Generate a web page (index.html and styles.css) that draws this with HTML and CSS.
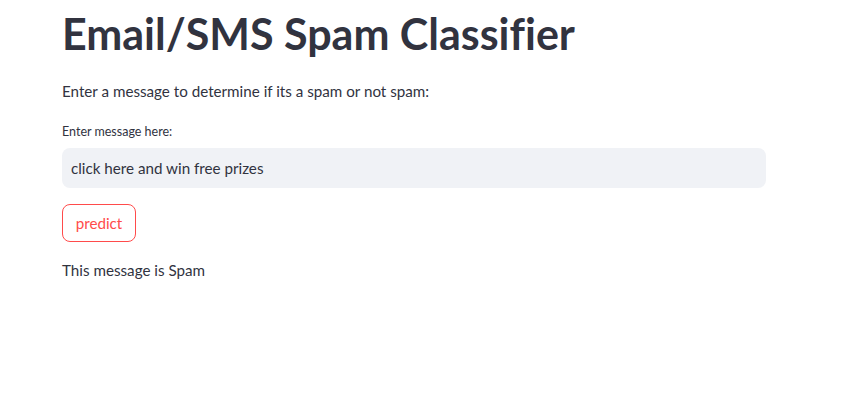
FILE: index.html
```html
<!DOCTYPE html>
<html>
<head>
<meta charset="utf-8">
<link rel="stylesheet" href="styles.css">
</head>
<body>
<main class="container">
  <h1 class="title">Email/SMS Spam Classifier</h1>
  <p class="intro">Enter a message to determine if its a spam or not spam:</p>
  <label class="label">Enter message here:</label>
  <div class="input">click here and win free prizes</div>
  <button class="btn">predict</button>
  <p class="result">This message is Spam</p>
</main>
</body>
</html>
```

FILE: styles.css
```css
html, body {
  margin: 0;
  padding: 0;
  background: #ffffff;
}
body {
  font-family: "Lato", "Noto Sans", sans-serif;
  color: #31333f;
  font-variant-ligatures: none;
}
.container {
  width: 704px;
  margin-left: 62px;
  display: flex;
  flex-direction: column;
  align-items: flex-start;
}
.title {
  font-size: 43px;
  font-weight: 700;
  line-height: 52px;
  margin: 8px 0 0 0;
}
.intro {
  font-size: 15.2px;
  line-height: 24px;
  margin: 19px 0 0 0;
}
.label {
  font-size: 12.5px;
  line-height: 18px;
  margin-top: 20px;
}
.input {
  box-sizing: border-box;
  width: 704px;
  height: 40px;
  margin-top: 7px;
  background: #f0f2f6;
  border-radius: 8px;
  padding: 0 9px;
  display: flex;
  align-items: center;
  font-size: 15.2px;
}
.btn {
  margin-top: 16px;
  box-sizing: border-box;
  height: 38px;
  width: 74px;
  border: 1px solid #ff4b4b;
  border-radius: 8px;
  background: #ffffff;
  color: #ff4b4b;
  font-family: inherit;
  font-size: 15.2px;
  padding: 0;
}
.result {
  font-size: 15.2px;
  line-height: 24px;
  margin: 16px 0 0 0;
}
```
